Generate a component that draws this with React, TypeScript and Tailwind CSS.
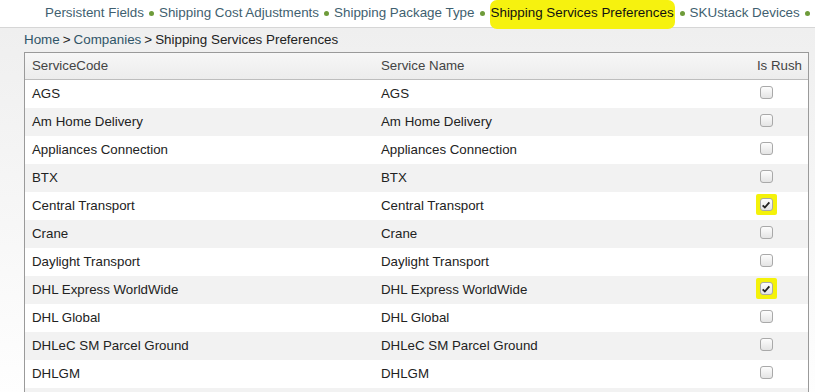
const navItems = [
  "Persistent Fields",
  "Shipping Cost Adjustments",
  "Shipping Package Type",
  "Shipping Services Preferences",
  "SKUstack Devices",
  "SKUstack Settings",
];

const rows: { code: string; name: string; rush: boolean }[] = [
  { code: "AGS", name: "AGS", rush: false },
  { code: "Am Home Delivery", name: "Am Home Delivery", rush: false },
  { code: "Appliances Connection", name: "Appliances Connection", rush: false },
  { code: "BTX", name: "BTX", rush: false },
  { code: "Central Transport", name: "Central Transport", rush: true },
  { code: "Crane", name: "Crane", rush: false },
  { code: "Daylight Transport", name: "Daylight Transport", rush: false },
  { code: "DHL Express WorldWide", name: "DHL Express WorldWide", rush: true },
  { code: "DHL Global", name: "DHL Global", rush: false },
  { code: "DHLeC SM Parcel Ground", name: "DHLeC SM Parcel Ground", rush: false },
  { code: "DHLGM", name: "DHLGM", rush: false },
];

function Checkbox({ checked, highlight }: { checked: boolean; highlight?: boolean }) {
  return (
    <span
      className={`inline-flex items-center justify-center w-[21px] h-[21px] rounded-[2px] ${
        highlight ? "bg-[#f4f20a]" : ""
      }`}
    >
      <span className="w-[13px] h-[13px] rounded-[3px] border border-[#a9a9a9] bg-gradient-to-b from-[#fdfdfd] to-[#e4e4e4] flex items-center justify-center">
        {checked && (
          <svg viewBox="0 0 12 12" className="w-[10px] h-[10px]">
            <path d="M2 6.5 L4.6 9 L10 2.8" fill="none" stroke="#222" strokeWidth="2.2" />
          </svg>
        )}
      </span>
    </span>
  );
}

export default function App() {
  return (
    <div className="w-[815px] h-[392px] overflow-hidden bg-white text-[13.3px] font-['Liberation_Sans',Arial,sans-serif]">
      <div className="h-[28px] border-b border-[#d6d6d6] flex items-center pl-[45px] whitespace-nowrap text-[13.4px] text-[#3f5f70]">
        {navItems.map((item, i) => (
          <span key={item} className="flex items-center">
            {i > 0 && <span className="mx-[5px] w-[5px] h-[5px] rounded-full bg-[#6e9b3a]" />}
            {item === "Shipping Services Preferences" ? (
              <span className="bg-[#f6f20f] text-[#111] rounded-[7px] px-[1px] pt-[3px] pb-[5px] -mt-[3px] -mb-[5px]">
                {item}
              </span>
            ) : (
              <span>{item}</span>
            )}
          </span>
        ))}
      </div>
      <div className="bg-gradient-to-b from-[#efefef] to-white pl-[24px] pr-[6px]">
        <div className="h-[24px] flex items-center text-[13.4px] text-[#2f5568]">
          <span>Home</span>
          <span className="text-[#222] mx-[3px]">&gt;</span>
          <span>Companies</span>
          <span className="text-[#222] mx-[3px]">&gt;</span>
          <span className="text-[#222]">Shipping Services Preferences</span>
        </div>
        <div className="border border-[#9a9a9a] bg-white text-[#222]">
          <div className="h-[27px] flex items-center bg-gradient-to-b from-[#f7f7f7] to-[#ececec] border-b border-[#bdbdbd] text-[#444]">
            <span className="pl-[7px] w-[356px]">ServiceCode</span>
            <span className="flex-1">Service Name</span>
            <span className="pr-[6px]">Is Rush</span>
          </div>
          {rows.map((r, i) => (
            <div
              key={r.code}
              className={`h-[28px] flex items-center ${i % 2 === 1 ? "bg-[#f2f2f2]" : "bg-white"}`}
            >
              <span className="pl-[7px] w-[356px]">{r.code}</span>
              <span className="flex-1">{r.name}</span>
              <span className="w-[36px] mr-[24px] flex justify-center -mt-[3px]">
                <Checkbox checked={r.rush} highlight={r.rush} />
              </span>
            </div>
          ))}
          <div className="h-[28px] bg-[#f2f2f2]" />
        </div>
      </div>
    </div>
  );
}
